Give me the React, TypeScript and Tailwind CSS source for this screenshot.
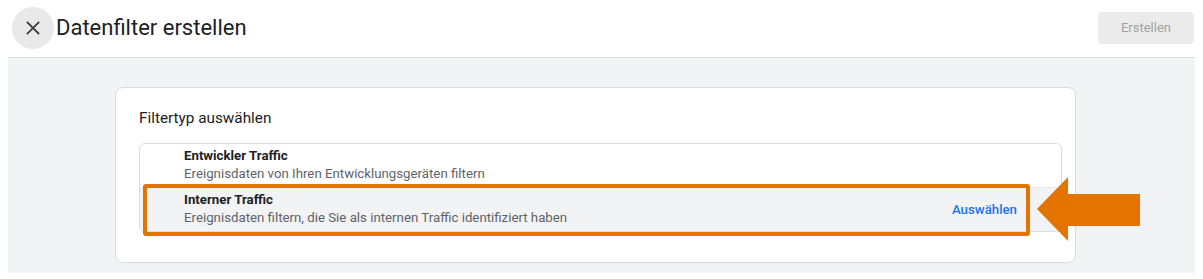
import React from "react";

export default function App() {
  return (
    <div className="relative w-[1203px] h-[279px] overflow-hidden bg-white font-['Roboto',sans-serif] text-[#202124]">
      <header className="flex h-[57px] items-center justify-between pb-[2px]">
        <div className="flex items-center">
          <button className="ml-[12px] flex h-[42px] w-[42px] items-center justify-center rounded-full bg-[#e9e9e9]">
            <svg width="14" height="14" viewBox="0 0 14 14" fill="none">
              <path d="M1.5 1.5 L12.5 12.5 M12.5 1.5 L1.5 12.5" stroke="#3c4043" strokeWidth="1.8" strokeLinecap="square" />
            </svg>
          </button>
          <h1 className="ml-[2px] text-[22px] leading-[26px] text-[#202124]">Datenfilter erstellen</h1>
        </div>
        <button className="mr-[9px] h-[32px] w-[96px] rounded-[4px] bg-[#ebebeb] text-[13px] text-[#a2a2a2]">Erstellen</button>
      </header>
      <div className="mx-[8px] h-[216px] border-t border-[#dadce0] bg-[#f1f3f4] pt-[29px]">
        <div className="ml-[107px] h-[176px] w-[961px] rounded-[8px] border border-[#dadce0] bg-white px-[23px] pt-[20px]">
          <div className="text-[15.3px] leading-[20px] text-[#202124]">Filtertyp auswählen</div>
          <div className="mt-[15px] w-[923px] overflow-hidden rounded-[6px] border border-[#dadce0]">
            <div className="h-[43px] pl-[44px] pt-[3px]">
              <div className="text-[13.25px] font-bold leading-[18px] text-[#202124]">Entwickler Traffic</div>
              <div className="text-[13.25px] leading-[18px] text-[#5f6368]">Ereignisdaten von Ihren Entwicklungsgeräten filtern</div>
            </div>
            <div className="flex h-[44px] items-center justify-between border-t border-[#e8eaed] bg-[#f1f3f4] pl-[44px] pr-[44px]">
              <div className="-mt-[1px]">
                <div className="text-[13.25px] font-bold leading-[18px] text-[#202124]">Interner Traffic</div>
                <div className="text-[13.25px] leading-[18px] text-[#5f6368]">Ereignisdaten filtern, die Sie als internen Traffic identifiziert haben</div>
              </div>
              <span className="text-[13.25px] font-medium text-[#1a73e8]">Auswählen</span>
            </div>
          </div>
        </div>
      </div>
      <div className="absolute left-[143px] top-[184px] h-[52px] w-[887px] rounded-[3px] border-[4px] border-[#e37400]" />
      <svg className="absolute left-[1036px] top-[177px]" width="105" height="65" viewBox="0 0 105 65">
        <path d="M1 32 L32 0 L32 17 L104 17 L104 49 L32 49 L32 64 Z" fill="#e37400" />
      </svg>
    </div>
  );
}
